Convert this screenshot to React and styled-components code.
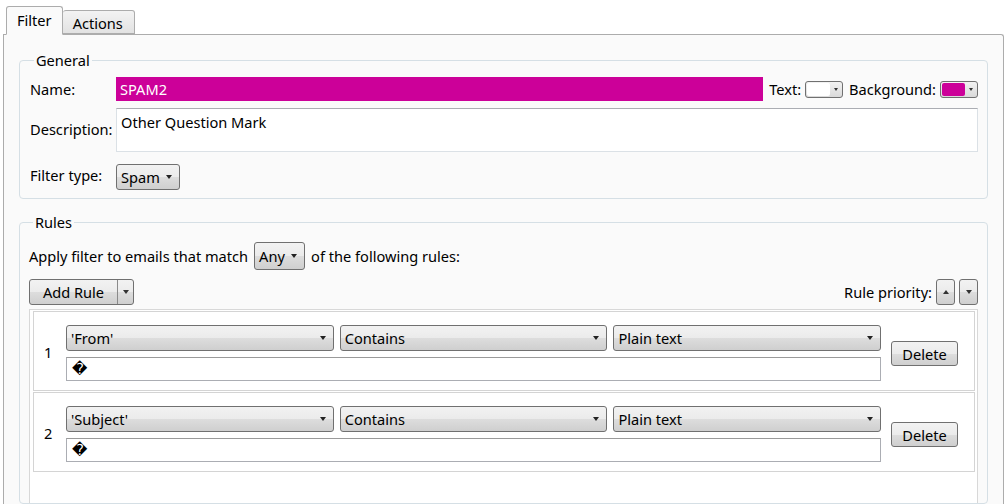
import React from 'react';
import styled, { createGlobalStyle, css } from 'styled-components';

const FONT = `'Segoe UI', 'Noto Sans', sans-serif`;

const GlobalStyle = createGlobalStyle`
  html, body {
    margin: 0;
    padding: 0;
    background: #ffffff;
    overflow: hidden;
  }
  body {
    font-family: ${FONT};
    font-size: 14.6px;
    color: #000;
  }
`;

const rules = [
  { id: 1, field: "'From'", op: 'Contains', mode: 'Plain text' },
  { id: 2, field: "'Subject'", op: 'Contains', mode: 'Plain text' },
];

const Window = styled.div`
  width: 1006px;
  height: 504px;
  padding: 5px 2px 0 3px;
  box-sizing: border-box;
  display: flex;
  flex-direction: column;
`;

const TabStrip = styled.div`
  display: flex;
  align-items: flex-end;
  padding-left: 3px;
  height: 29px;
  position: relative;
  z-index: 1;
`;

const Tab = styled.div`
  box-sizing: border-box;
  border: 1px solid #acacac;
  border-radius: 3px 3px 0 0;
  display: flex;
  align-items: center;
  ${({ active }) =>
    active
      ? css`
          height: 29px;
          padding: 0 10px 2px 10px;
          background: #fafafa;
          border-bottom-color: #fafafa;
          margin-bottom: -1px;
        `
      : css`
          height: 24px;
          padding: 1px 11px 0 10px;
          background: linear-gradient(#f3f3f3, #e2e2e2);
          border-left: none;
        `}
`;

const Panel = styled.div`
  flex: 1;
  border: 1px solid #acacac;
  border-bottom: none;
  border-radius: 0 3px 0 0;
  background: #fafafa;
  padding: 17px 15px 0 15px;
  display: flex;
  flex-direction: column;
  gap: 15px;
  min-height: 0;
`;

const Group = styled.fieldset`
  margin: 0;
  border: 1px solid #d5dfe5;
  border-radius: 4px;
  padding: ${({ pad }) => pad};
  min-width: 0;
  ${({ grow }) => grow && 'flex: 1;'}
`;

const Legend = styled.legend`
  padding: 0 2px;
  margin-left: 4px;
  line-height: 16px;
`;

const FormGrid = styled.div`
  display: grid;
  grid-template-columns: 86px 1fr;
  align-items: center;
  row-gap: 7px;
`;

const Label = styled.span`
  white-space: nowrap;
  ${({ top }) => top && 'align-self: start; padding-top: 11px;'}
`;

const NameRow = styled.div`
  display: flex;
  align-items: center;
`;

const NameInput = styled.div`
  flex: 1;
  height: 24px;
  box-sizing: border-box;
  background: #cc0099;
  color: #fff;
  padding: 0 4px;
  display: flex;
  align-items: center;
`;

const InlineLabel = styled.span`
  margin: 0 4px 0 6px;
`;

const ColorPicker = styled.div`
  width: 38px;
  height: 17px;
  box-sizing: border-box;
  border: 1px solid #707070;
  border-radius: 3px;
  background: linear-gradient(#f2f2f2, #d9d9d9);
  display: flex;
  align-items: center;
  padding: 1px;
  gap: 1px;
`;

const Swatch = styled.div`
  flex: 1;
  height: 100%;
  border-radius: 2px;
  background: ${({ color }) => color};
`;

const SmallArrow = styled.span`
  width: 10px;
  display: flex;
  justify-content: center;
  &::after {
    content: '';
    border-left: 2.5px solid transparent;
    border-right: 2.5px solid transparent;
    border-top: 3px solid #333;
  }
`;

const TextArea = styled.div`
  height: 44px;
  box-sizing: border-box;
  border: 1px solid #dbe1e6;
  border-top-color: #abadb3;
  background: #fff;
  padding: 3px 4px;
`;

const Combo = styled.div`
  box-sizing: border-box;
  height: ${({ h }) => h || 26}px;
  ${({ w }) => (w ? `width: ${w}px;` : 'flex: 1;')}
  min-width: 0;
  border: 1px solid #707070;
  border-radius: 3px;
  background: linear-gradient(#f2f2f2 0%, #ebebeb 50%, #dddddd 51%, #cfcfcf 100%);
  display: flex;
  align-items: center;
  padding: 0 7px 0 4px;
  justify-content: space-between;
  white-space: nowrap;
  &::after {
    content: '';
    margin-left: 6px;
    border-left: 3px solid transparent;
    border-right: 3px solid transparent;
    border-top: 4px solid #222;
  }
`;

const Row = styled.div`
  display: flex;
  align-items: center;
  gap: ${({ gap }) => gap || 0}px;
`;

const FilterTypeRow = styled(Row)`
  margin-top: 5px;
`;

const RulesBody = styled.div`
  display: flex;
  flex-direction: column;
  height: 100%;
  padding-top: 12px;
  box-sizing: border-box;
`;

const ApplyRow = styled(Row)`
  gap: 6px;
`;

const Toolbar = styled.div`
  display: flex;
  align-items: center;
  justify-content: space-between;
  margin-top: 9px;
`;

const Button = styled.div`
  box-sizing: border-box;
  height: 26px;
  border: 1px solid #707070;
  border-radius: 3px;
  background: linear-gradient(#f2f2f2 0%, #ebebeb 50%, #dddddd 51%, #cfcfcf 100%);
  display: flex;
  align-items: center;
  justify-content: center;
  padding: 0 12px;
`;

const SplitButton = styled(Button)`
  padding: 0;
  width: 105px;
`;

const SplitMain = styled.span`
  width: 87px;
  text-align: center;
  border-right: 1px solid #8a8a8a;
  height: 100%;
  display: flex;
  align-items: center;
  justify-content: center;
`;

const Arrow = styled.span`
  flex: 1;
  display: flex;
  justify-content: center;
  &::after {
    content: '';
    border-left: 3px solid transparent;
    border-right: 3px solid transparent;
    ${({ up }) => (up ? 'border-bottom: 4px solid #333;' : 'border-top: 4px solid #333;')}
  }
`;

const Priority = styled.div`
  display: flex;
  align-items: center;
  gap: 4px;
`;

const StepButton = styled(Button)`
  width: 19px;
  padding: 0;
`;

const ListBox = styled.div`
  margin-top: 4px;
  flex: 1;
  border: 1px solid #d8d8d8;
  border-bottom: none;
  background: #fff;
  padding: 1px 2px 0 3px;
  display: flex;
  flex-direction: column;
  gap: 1px;
`;

const RuleItem = styled.div`
  display: flex;
  align-items: center;
  border: 1px solid #d4d4d4;
  height: 80px;
  box-sizing: border-box;
  padding: 0 16px 0 0;
`;

const RuleNumber = styled.div`
  width: 32px;
  box-sizing: border-box;
  padding-left: 10px;
  padding-top: 2px;
`;

const RuleFields = styled.div`
  width: 816px;
  display: flex;
  flex-direction: column;
  gap: 6px;
  padding-top: 4px;
`;

const RuleInput = styled.div`
  height: 24px;
  box-sizing: border-box;
  border: 1px solid #abadb3;
  border-top-color: #9a9a9a;
  background: #fff;
  padding: 0 5px;
  display: flex;
  align-items: center;
  font-family: 'DejaVu Sans', sans-serif;
  font-size: 15px;
`;

const DeleteButton = styled(Button)`
  margin-left: 10px;
  width: 67px;
  padding: 0;
  height: 25px;
  margin-top: 5px;
`;

function RuleRow({ rule }) {
  return (
    <RuleItem>
      <RuleNumber>{rule.id}</RuleNumber>
      <RuleFields>
        <Row gap={6}>
          <Combo>{rule.field}</Combo>
          <Combo>{rule.op}</Combo>
          <Combo>{rule.mode}</Combo>
        </Row>
        <RuleInput>{'\uFFFD'}</RuleInput>
      </RuleFields>
      <DeleteButton>Delete</DeleteButton>
    </RuleItem>
  );
}

export default function App() {
  return (
    <>
      <GlobalStyle />
      <Window>
        <TabStrip>
          <Tab active>Filter</Tab>
          <Tab>Actions</Tab>
        </TabStrip>
        <Panel>
          <Group pad="9px 9px 8px 10px">
            <Legend>General</Legend>
            <FormGrid>
              <Label>Name:</Label>
              <NameRow>
                <NameInput>SPAM2</NameInput>
                <InlineLabel>Text:</InlineLabel>
                <ColorPicker>
                  <Swatch color="#ffffff" />
                  <SmallArrow />
                </ColorPicker>
                <InlineLabel>Background:</InlineLabel>
                <ColorPicker>
                  <Swatch color="#cc0099" />
                  <SmallArrow />
                </ColorPicker>
              </NameRow>
              <Label top>Description:</Label>
              <TextArea>Other Question Mark</TextArea>
              <Label>Filter type:</Label>
              <FilterTypeRow>
                <Combo w={64}>Spam</Combo>
              </FilterTypeRow>
            </FormGrid>
          </Group>
          <Group grow pad="0 9px 0 9px">
            <Legend>Rules</Legend>
            <RulesBody>
              <ApplyRow>
                <span>Apply filter to emails that match</span>
                <Combo w={51} h={28}>Any</Combo>
                <span>of the following rules:</span>
              </ApplyRow>
              <Toolbar>
                <SplitButton>
                  <SplitMain>Add Rule</SplitMain>
                  <Arrow />
                </SplitButton>
                <Priority>
                  <span>Rule priority:</span>
                  <StepButton>
                    <Arrow up />
                  </StepButton>
                  <StepButton>
                    <Arrow />
                  </StepButton>
                </Priority>
              </Toolbar>
              <ListBox>
                {rules.map(r => (
                  <RuleRow key={r.id} rule={r} />
                ))}
              </ListBox>
            </RulesBody>
          </Group>
        </Panel>
      </Window>
    </>
  );
}
